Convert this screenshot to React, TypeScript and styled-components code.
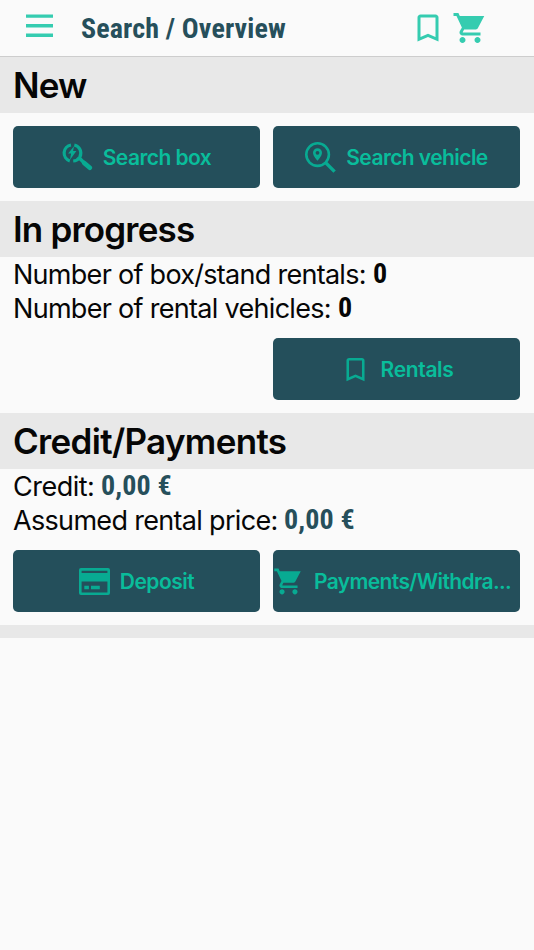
import React from "react";
import styled, { createGlobalStyle } from "styled-components";

const Global = createGlobalStyle`
  * { box-sizing: border-box; }
  html, body { margin: 0; padding: 0; background: #fafafa; }
`;

const Screen = styled.main`
  width: 534px;
  min-height: 950px;
  background: #fafafa;
  color: #060606;
  font-family: Inter, "Liberation Sans", sans-serif;
  overflow: hidden;
`;

const Header = styled.header`
  display: flex;
  align-items: flex-start;
  height: 57px;
  padding: 10px 46px 0 21px;
  border-bottom: 1px solid #cdcdcd;
  color: #35ccb0;
`;

const MenuButton = styled.div`
  width: 36px;
  height: 36px;
  margin-right: 24px;
`;

const Condensed = styled.span<{ $width: number; $size: number; $color?: string; $lineHeight?: number }>`
  display: inline-block;
  width: ${(p) => p.$width}px;
  font-family: Roboto, "Liberation Sans", sans-serif;
  font-weight: 700;
  font-stretch: 75%;
  font-size: ${(p) => p.$size}px;
  line-height: ${(p) => p.$lineHeight ?? 34}px;
  letter-spacing: 0.14px;
  white-space: nowrap;
  color: ${(p) => p.$color ?? "inherit"};
`;

const HeaderActions = styled.div`
  display: flex;
  gap: 6px;
  margin-left: auto;
`;

const Band = styled.h2<{ $spacing: number }>`
  height: 56px;
  margin: 0;
  padding-left: 13px;
  background: #e8e8e8;
  font-size: 35px;
  font-weight: 600;
  line-height: 57px;
  letter-spacing: ${(p) => p.$spacing}px;
  white-space: nowrap;
`;

const Footer = styled.div`
  height: 13px;
  background: #e8e8e8;
`;

const Actions = styled.div`
  display: grid;
  grid-template-columns: 247px 247px;
  gap: 13px;
  padding: 13px;
`;

const Button = styled.button<{ $second?: boolean; $start?: boolean }>`
  display: flex;
  align-items: center;
  justify-content: ${(p) => (p.$start ? "flex-start" : "center")};
  gap: 10px;
  grid-column: ${(p) => (p.$second ? 2 : "auto")};
  height: 62px;
  padding: 0;
  border: 0;
  border-radius: 5px;
  background: #244f5b;
  color: #08aa92;
  font-family: inherit;
  overflow: hidden;
`;

const Label = styled.span<{ $spacing: number }>`
  padding-top: 2px;
  color: #09bd9b;
  font-size: 21px;
  font-weight: 600;
  line-height: 30px;
  letter-spacing: ${(p) => p.$spacing}px;
  white-space: nowrap;
`;

const Info = styled.div`
  padding-left: 13px;
  height: 68px;
`;

const Line = styled.div`
  display: flex;
  height: 34px;
`;

const Caption = styled.span<{ $width: number; $spacing: number }>`
  flex: none;
  width: ${(p) => p.$width}px;
  font-size: 27px;
  line-height: 35px;
  letter-spacing: ${(p) => p.$spacing}px;
  white-space: nowrap;
`;

const Icon = styled.svg<{ $size: number }>`
  display: block;
  flex: none;
  width: ${(p) => p.$size}px;
  height: ${(p) => p.$size}px;
`;

const Bookmark = ({ size }: { size: number }) => (
  <Icon $size={size} viewBox="0 0 24 24" fill="currentColor">
    <path d="M17 3H7c-1.1 0-1.99.9-1.99 2L5 21l7-3 7 3V5c0-1.1-.9-2-2-2zm0 15l-5-2.18L7 18V5h10v13z" />
  </Icon>
);

const Cart = ({ size }: { size: number }) => (
  <Icon $size={size} viewBox="0 0 24 24" fill="currentColor">
    <path d="M7 18c-1.1 0-1.99.9-1.99 2S5.9 22 7 22s2-.9 2-2-.9-2-2-2zM1 2v2h2l3.6 7.59-1.35 2.45c-.16.28-.25.61-.25.96 0 1.1.9 2 2 2h12v-2H7.42c-.14 0-.25-.11-.25-.25l.03-.12.9-1.63h7.45c.75 0 1.41-.41 1.75-1.03L21.5 4H5.21l-.94-2H1zm16 16c-1.1 0-1.99.9-1.99 2s.89 2 1.99 2 2-.9 2-2-.9-2-2-2z" />
  </Icon>
);

const BoxSearch = () => (
  <Icon $size={31} viewBox="0.8 0.3 31 31" fill="none" stroke="currentColor">
    <path d="M9.8 3.3A8.2 8.2 0 0 0 8.6 19.2M13.1 3.3A8.3 8.3 0 0 1 18.6 15.4A8.3 8.3 0 0 1 12 19.3" strokeWidth="3.2" />
    <path d="M12.8 4.6L6.9 11.7h3L8.8 18l6.4-8.8h-3.3z" fill="currentColor" stroke="none" />
    <path d="M17.6 15.8l5 5" strokeWidth="3.4" />
    <path d="M23 21.2l5.6 4.9" strokeWidth="4.6" strokeLinecap="round" />
  </Icon>
);

const VehicleSearch = () => (
  <Icon $size={31} viewBox="0 0 31 31" fill="none" stroke="currentColor">
    <circle cx="12.6" cy="12.6" r="11.3" strokeWidth="2.6" />
    <path d="M20.6 20.6l9 9" strokeWidth="3.4" />
    <path fillRule="evenodd" d="M12.5 6.2a4.5 4.5 0 0 0-4.5 4.5c0 3.3 4.5 8 4.5 8s4.5-4.7 4.5-8a4.5 4.5 0 0 0-4.5-4.5zm0 2.7a1.9 1.9 0 1 1 0 3.8 1.9 1.9 0 0 1 0-3.8z" fill="currentColor" stroke="none" />
  </Icon>
);

const Card = () => (
  <Icon $size={31} viewBox="0 0 31 31" fill="currentColor">
    <path fillRule="evenodd" d="M2 2h27a2 2 0 0 1 2 2v23a2 2 0 0 1-2 2H2a2 2 0 0 1-2-2V4a2 2 0 0 1 2-2zM2.6 4.7v2.4h25.8V4.7zM2.6 15.5v11h25.8v-11z" />
    <path d="M5.3 19.7h4.6v3.6H5.3zM12 19.7h8.8v3.6H12z" />
  </Icon>
);

export default function App() {
  return (
    <>
      <Global />
      <Screen>
        <Header>
          <MenuButton>
            <Icon $size={36} viewBox="0 0 36 36" fill="currentColor">
              <path d="M5 4.4h27v3.4H5zM5 14.1h27v3.4H5zM5 23.6h27v3.4H5z" />
            </Icon>
          </MenuButton>
          <Condensed $width={205} $size={28} $lineHeight={37} $color="#264f5b">Search / Overview</Condensed>
          <HeaderActions>
            <Bookmark size={36} />
            <Cart size={36} />
          </HeaderActions>
        </Header>

        <Band $spacing={-0.9}>New</Band>
        <Actions>
          <Button><BoxSearch /><Label $spacing={-0.55}>Search box</Label></Button>
          <Button><VehicleSearch /><Label $spacing={-0.57}>Search vehicle</Label></Button>
        </Actions>

        <Band $spacing={-0.82}>In progress</Band>
        <Info>
          <Line>
            <Caption $width={360} $spacing={-0.72}>Number of box/stand rentals:</Caption>
            <Condensed $width={20} $size={28}>0</Condensed>
          </Line>
          <Line>
            <Caption $width={325} $spacing={-0.7}>Number of rental vehicles:</Caption>
            <Condensed $width={20} $size={28}>0</Condensed>
          </Line>
        </Info>
        <Actions>
          <Button $second><Bookmark size={31} /><Label $spacing={-0.35}>Rentals</Label></Button>
        </Actions>

        <Band $spacing={-0.68}>Credit/Payments</Band>
        <Info>
          <Line>
            <Caption $width={88} $spacing={-0.5}>Credit:</Caption>
            <Condensed $width={72} $size={28} $color="#264f5b">0,00 €</Condensed>
          </Line>
          <Line>
            <Caption $width={271} $spacing={-0.68}>Assumed rental price:</Caption>
            <Condensed $width={72} $size={28} $color="#264f5b">0,00 €</Condensed>
          </Line>
        </Info>
        <Actions>
          <Button><Card /><Label $spacing={-0.5}>Deposit</Label></Button>
          <Button $start><Cart size={31} /><Label $spacing={-0.63}>Payments/Withdra...</Label></Button>
        </Actions>
        <Footer />
      </Screen>
    </>
  );
}
